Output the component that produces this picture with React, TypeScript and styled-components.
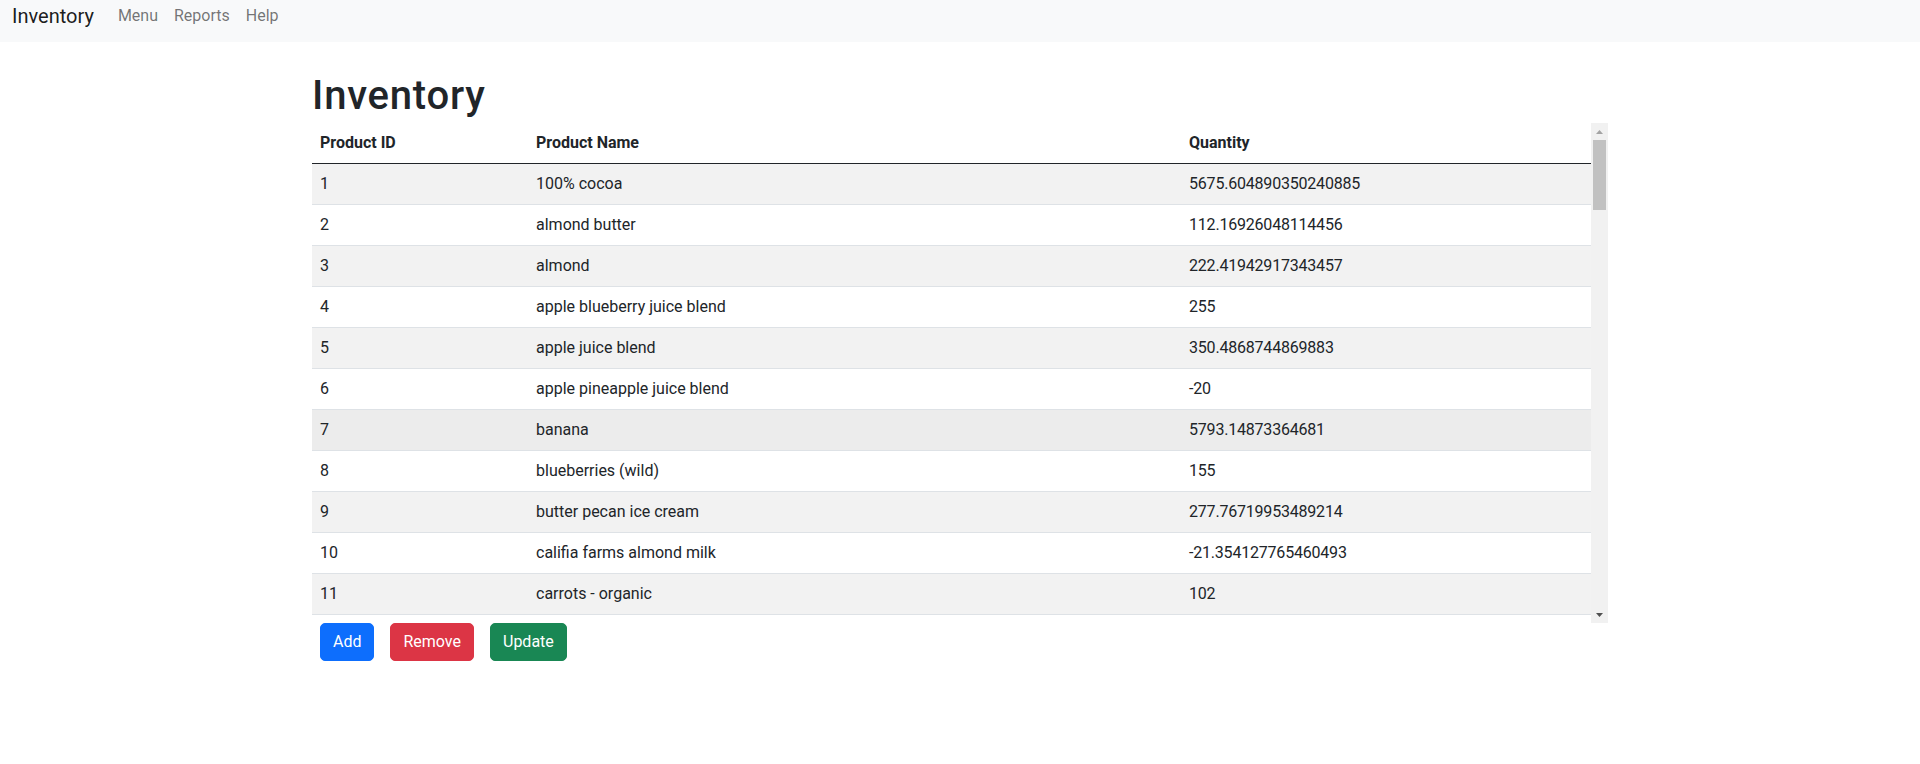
import React from "react";
import styled, { createGlobalStyle } from "styled-components";

const GlobalStyle = createGlobalStyle`
  * {
    box-sizing: border-box;
  }

  body {
    margin: 0;
    background: #fff;
    color: #212529;
    font-family: Roboto, "Noto Sans", "Liberation Sans", sans-serif;
    font-size: 16px;
    line-height: 1.5;
  }
`;

const Navbar = styled.nav`
  height: 42px;
  background-color: #f8f9fa;
  display: flex;
  align-items: flex-start;
  padding: 0 12px;
`;

const Brand = styled.a`
  font-size: 20px;
  line-height: 30px;
  margin-top: 1px;
  margin-right: 16px;
  color: rgba(0, 0, 0, 0.9);
  text-decoration: none;
`;

const NavList = styled.div`
  display: flex;
`;

const NavLink = styled.a`
  padding: 4px 8px 0;
  line-height: 24px;
  color: rgba(0, 0, 0, 0.55);
  text-decoration: none;
`;

const Container = styled.main`
  width: 1320px;
  margin: 0 auto;
  padding: 30px 12px 0;
`;

const Title = styled.h1`
  margin: 0 0 3px;
  font-size: 40px;
  font-weight: 500;
  line-height: 1.2;
  letter-spacing: 0.8px;
`;

const TableFrame = styled.div`
  display: flex;
  height: 500px;
`;

const ScrollArea = styled.div`
  flex: 1;
  overflow-y: auto;
  scrollbar-width: none;
`;

const Scrollbar = styled.div`
  width: 17px;
  display: flex;
  flex-direction: column;
  background: #f1f1f1;
`;

const ArrowButton = styled.div`
  height: 17px;
  display: flex;
  align-items: center;
  justify-content: center;
`;

const Track = styled.div`
  flex: 1;
  padding: 0 2px;
`;

const Thumb = styled.div`
  background: #c1c1c1;
`;

const Table = styled.table`
  width: 100%;
  border-collapse: collapse;
  table-layout: fixed;
`;

const HeadCell = styled.th<{ $width: number }>`
  width: ${(p) => p.$width}px;
  padding: 8px;
  text-align: left;
  font-weight: 700;
  vertical-align: bottom;
  border-bottom: 1px solid #212529;
`;

const Row = styled.tr<{ $striped: boolean; $hover?: boolean }>`
  background-color: ${(p) =>
    p.$hover ? "#ececec" : p.$striped ? "#f2f2f2" : "#ffffff"};
`;

const Cell = styled.td`
  padding: 8px;
  border-bottom: 1px solid #dee2e6;
  white-space: nowrap;
  overflow: hidden;
`;

const NumberCell = styled(Cell)`
  letter-spacing: -0.2px;
`;

const Actions = styled.div`
  display: flex;
  gap: 16px;
  padding: 0 8px;
`;

const Button = styled.button<{ $color: string }>`
  padding: 6px 12px;
  font-family: inherit;
  font-size: 16px;
  line-height: 24px;
  color: #fff;
  background-color: ${(p) => p.$color};
  border: 1px solid ${(p) => p.$color};
  border-radius: 5px;
  cursor: pointer;
`;

const products = [
  { id: 1, name: "100% cocoa", quantity: "5675.604890350240885" },
  { id: 2, name: "almond butter", quantity: "112.16926048114456" },
  { id: 3, name: "almond", quantity: "222.41942917343457" },
  { id: 4, name: "apple blueberry juice blend", quantity: "255" },
  { id: 5, name: "apple juice blend", quantity: "350.4868744869883" },
  { id: 6, name: "apple pineapple juice blend", quantity: "-20" },
  { id: 7, name: "banana", quantity: "5793.14873364681" },
  { id: 8, name: "blueberries (wild)", quantity: "155" },
  { id: 9, name: "butter pecan ice cream", quantity: "277.76719953489214" },
  { id: 10, name: "califia farms almond milk", quantity: "-21.354127765460493" },
  { id: 11, name: "carrots - organic", quantity: "102" },
  { id: 12, name: "", quantity: "" },
];

const Arrow = ({ up }: { up?: boolean }) => (
  <svg width="7" height="4" viewBox="0 0 7 4">
    <polygon
      points={up ? "3.5,0 7,4 0,4" : "0,0 7,0 3.5,4"}
      fill={up ? "#a3a3a3" : "#505050"}
    />
  </svg>
);

export default function App() {
  return (
    <>
      <GlobalStyle />
      <Navbar>
        <Brand href="#">Inventory</Brand>
        <NavList>
          <NavLink href="#">Menu</NavLink>
          <NavLink href="#">Reports</NavLink>
          <NavLink href="#">Help</NavLink>
        </NavList>
      </Navbar>
      <Container>
        <Title>Inventory</Title>
        <TableFrame>
          <ScrollArea>
            <Table>
              <thead>
                <tr>
                  <HeadCell $width={216}>Product ID</HeadCell>
                  <HeadCell $width={653}>Product Name</HeadCell>
                  <HeadCell $width={410}>Quantity</HeadCell>
                </tr>
              </thead>
              <tbody>
                {products.map((p, i) => (
                  <Row key={p.id} $striped={i % 2 === 0} $hover={p.id === 7}>
                    <Cell>{p.name ? p.id : "\u00a0"}</Cell>
                    <Cell>{p.name}</Cell>
                    <NumberCell>{p.quantity}</NumberCell>
                  </Row>
                ))}
              </tbody>
            </Table>
          </ScrollArea>
          <Scrollbar>
            <ArrowButton>
              <Arrow up />
            </ArrowButton>
            <Track>
              <Thumb style={{ height: 70 }} />
            </Track>
            <ArrowButton>
              <Arrow />
            </ArrowButton>
          </Scrollbar>
        </TableFrame>
        <Actions>
          <Button $color="#0d6efd">Add</Button>
          <Button $color="#dc3545">Remove</Button>
          <Button $color="#198754">Update</Button>
        </Actions>
      </Container>
    </>
  );
}
